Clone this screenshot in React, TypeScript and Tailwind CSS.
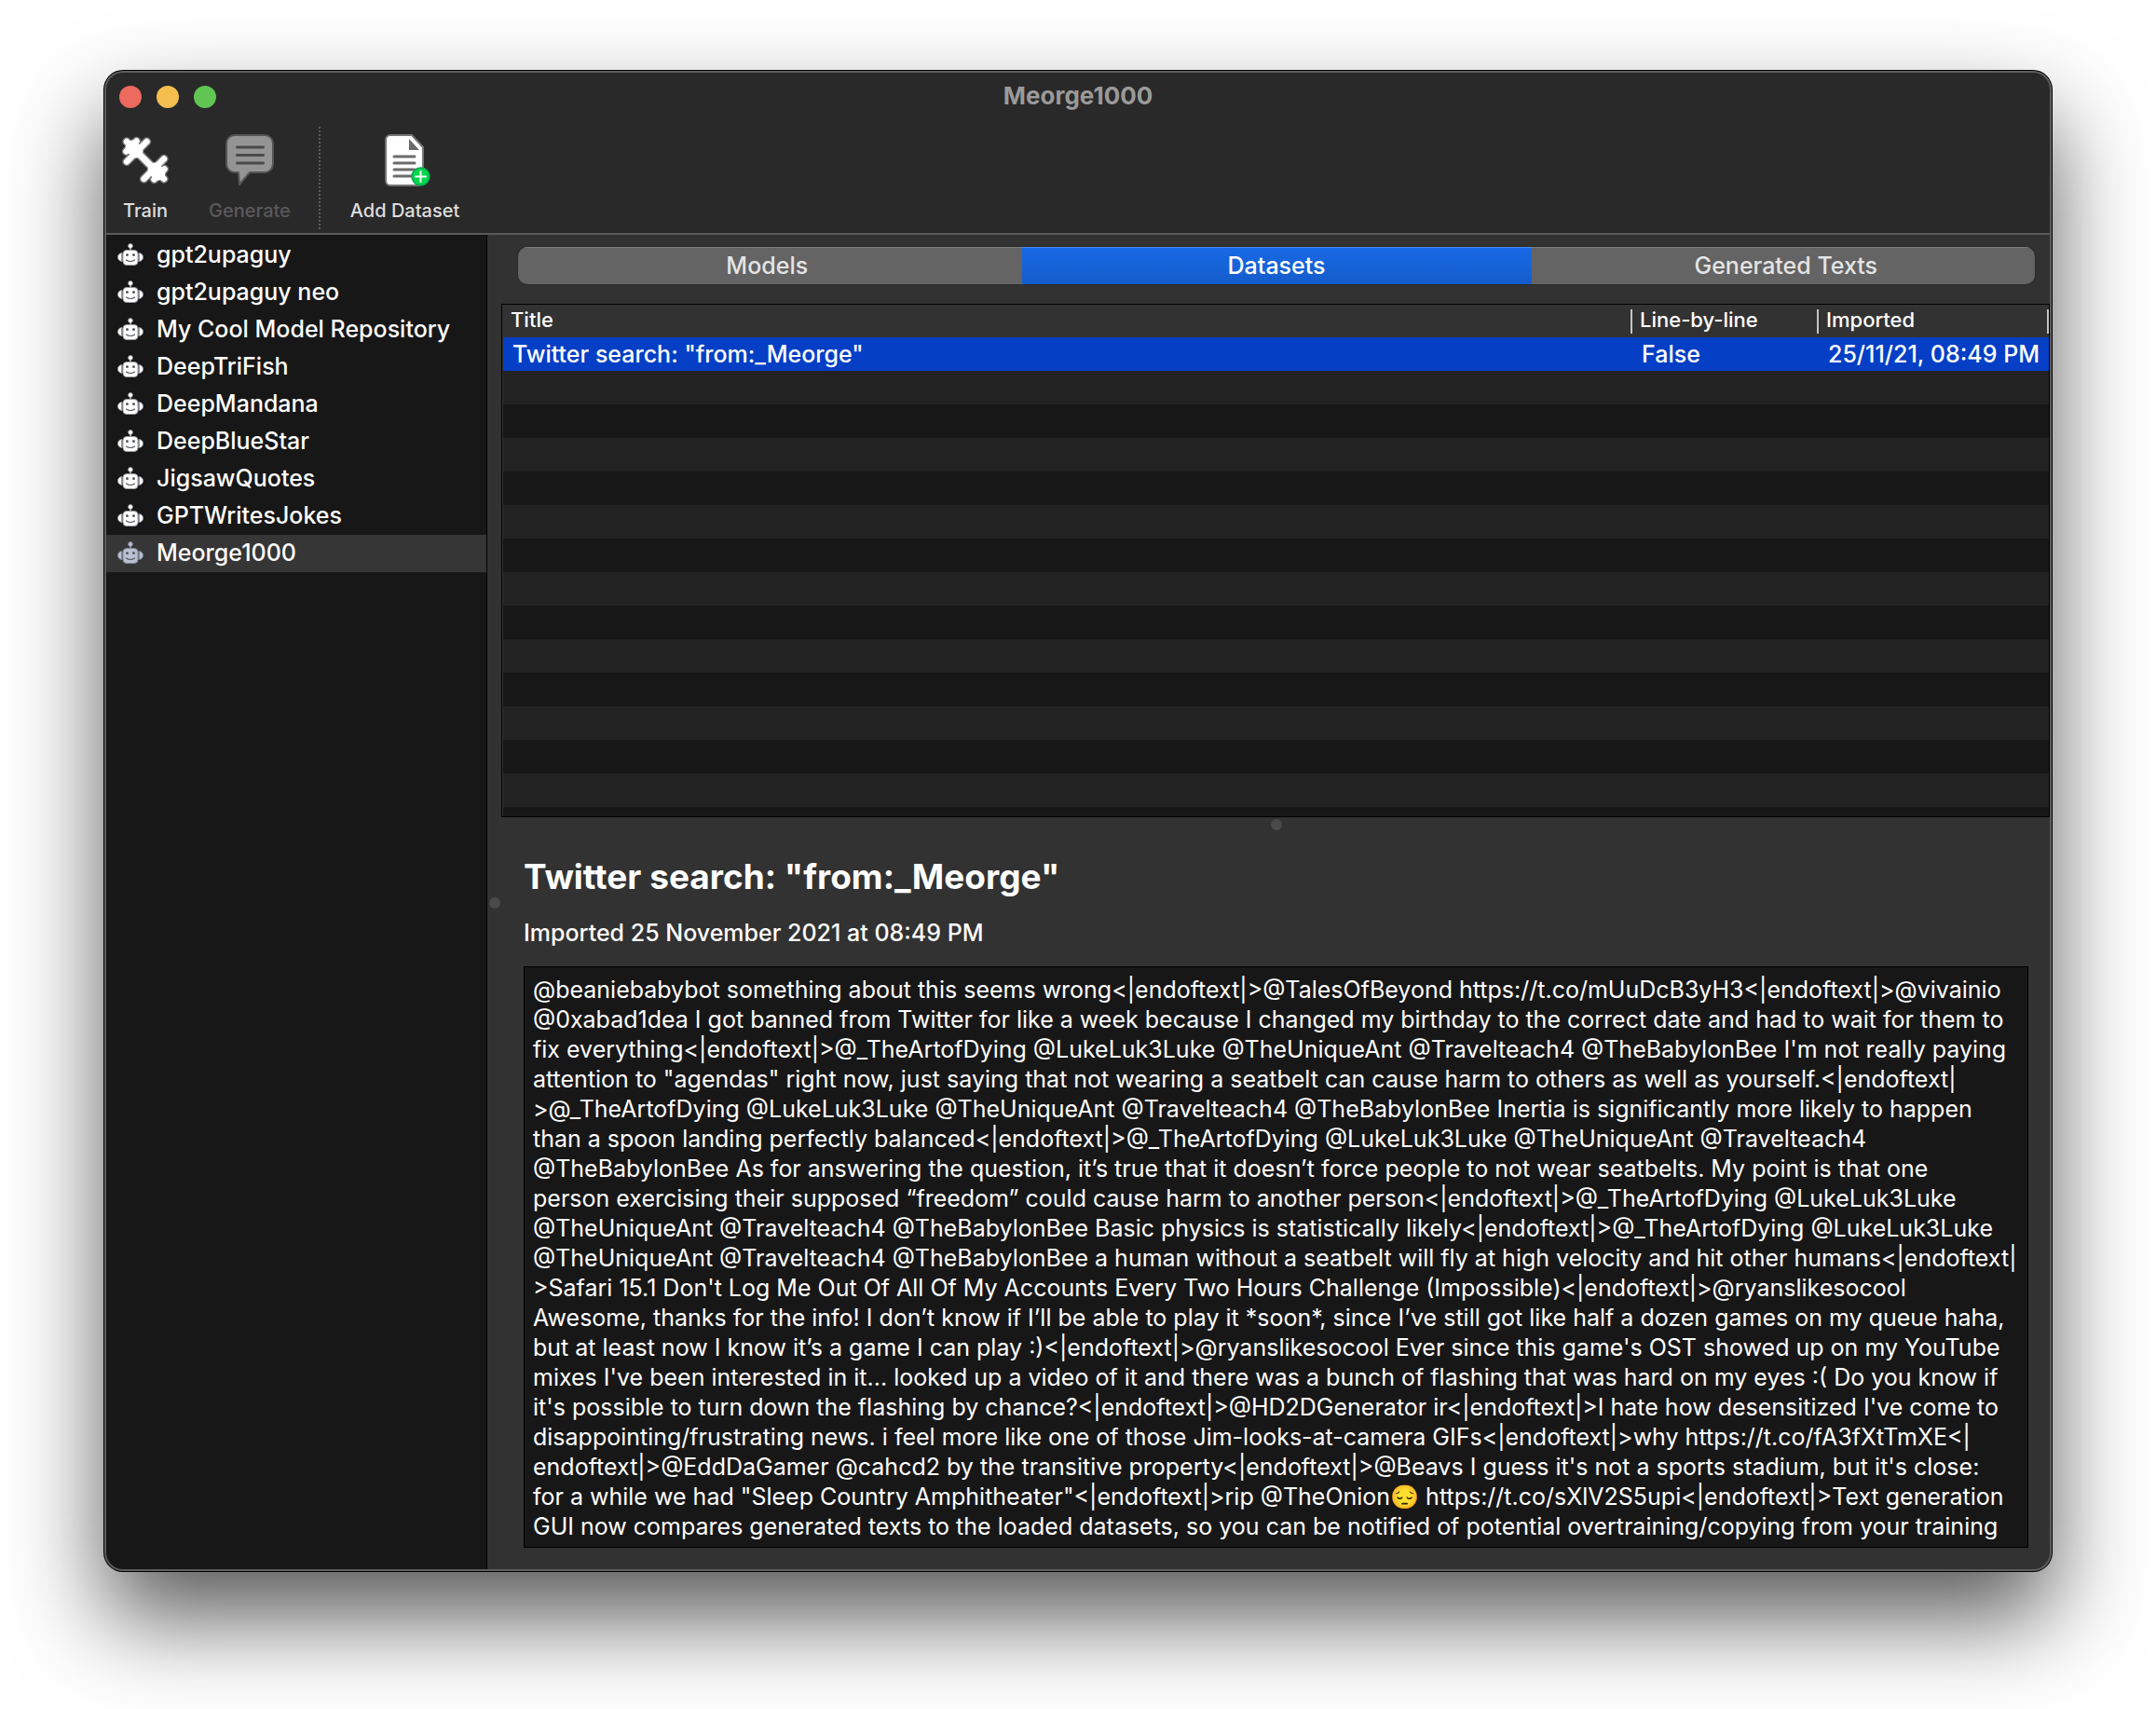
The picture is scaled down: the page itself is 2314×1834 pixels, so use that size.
import type { ReactNode } from "react";

const repositories = [
  "gpt2upaguy",
  "gpt2upaguy neo",
  "My Cool Model Repository",
  "DeepTriFish",
  "DeepMandana",
  "DeepBlueStar",
  "JigsawQuotes",
  "GPTWritesJokes",
  "Meorge1000",
];

const emptyRows = Array.from({ length: 14 }, (_, index) => index);

const datasetText = [
  "@beaniebabybot something about this seems wrong<|endoftext|>@TalesOfBeyond https://t.co/mUuDcB3yH3<|endoftext|>@vivainio",
  "@0xabad1dea I got banned from Twitter for like a week because I changed my birthday to the correct date and had to wait for them to",
  "fix everything<|endoftext|>@_TheArtofDying @LukeLuk3Luke @TheUniqueAnt @Travelteach4 @TheBabylonBee I'm not really paying",
  "attention to \"agendas\" right now, just saying that not wearing a seatbelt can cause harm to others as well as yourself.<|endoftext|",
  ">@_TheArtofDying @LukeLuk3Luke @TheUniqueAnt @Travelteach4 @TheBabylonBee Inertia is significantly more likely to happen",
  "than a spoon landing perfectly balanced<|endoftext|>@_TheArtofDying @LukeLuk3Luke @TheUniqueAnt @Travelteach4",
  "@TheBabylonBee As for answering the question, it’s true that it doesn’t force people to not wear seatbelts. My point is that one",
  "person exercising their supposed “freedom” could cause harm to another person<|endoftext|>@_TheArtofDying @LukeLuk3Luke",
  "@TheUniqueAnt @Travelteach4 @TheBabylonBee Basic physics is statistically likely<|endoftext|>@_TheArtofDying @LukeLuk3Luke",
  "@TheUniqueAnt @Travelteach4 @TheBabylonBee a human without a seatbelt will fly at high velocity and hit other humans<|endoftext|",
  ">Safari 15.1 Don't Log Me Out Of All Of My Accounts Every Two Hours Challenge (Impossible)<|endoftext|>@ryanslikesocool",
  "Awesome, thanks for the info! I don’t know if I’ll be able to play it *soon*, since I’ve still got like half a dozen games on my queue haha,",
  "but at least now I know it’s a game I can play :)<|endoftext|>@ryanslikesocool Ever since this game's OST showed up on my YouTube",
  "mixes I've been interested in it... looked up a video of it and there was a bunch of flashing that was hard on my eyes :( Do you know if",
  "it's possible to turn down the flashing by chance?<|endoftext|>@HD2DGenerator ir<|endoftext|>I hate how desensitized I've come to",
  "disappointing/frustrating news. i feel more like one of those Jim-looks-at-camera GIFs<|endoftext|>why https://t.co/fA3fXtTmXE<|",
  "endoftext|>@EddDaGamer @cahcd2 by the transitive property<|endoftext|>@Beavs I guess it's not a sports stadium, but it's close:",
  "for a while we had \"Sleep Country Amphitheater\"<|endoftext|>rip @TheOnion😔 https://t.co/sXlV2S5upi<|endoftext|>Text generation",
  "GUI now compares generated texts to the loaded datasets, so you can be notified of potential overtraining/copying from your training",
  "data",
].join("\n");

function RobotIcon({ selected = false }: { selected?: boolean }) {
  const face = selected ? "#b9c0d2" : "#ffffff";
  const edge = selected ? "#7e8593" : "#9a9a9a";
  return (
    <svg width="28" height="26" viewBox="0 0 28 26" aria-hidden="true">
      <path d="M14 4v4" stroke={edge} strokeWidth="2" />
      <circle cx="14" cy="3" r="2.4" fill={face} stroke={edge} strokeWidth="0.8" />
      <path d="M4.500 10.500v9C2 19 0.500 17.500 0.500 15s1.500-4 4-4.500z" fill={face} stroke={edge} strokeWidth="0.8" />
      <path d="M23.500 10.500v9c2.500-.5 4-2 4-4.500s-1.500-4-4-4.500z" fill={face} stroke={edge} strokeWidth="0.8" />
      <path d="M5 10.500v9M23 10.500v9" stroke={edge} strokeWidth="1.500" />
      <rect x="6" y="7.500" width="16" height="16" rx="4" fill={face} stroke={edge} strokeWidth="1" />
      <circle cx="10.500" cy="12.500" r="1.500" fill="#555b66" />
      <circle cx="17.500" cy="12.500" r="1.500" fill="#555b66" />
      <path d="M9.500 18c2.500 2 6.500 2 9 0" fill="none" stroke="#555b66" strokeWidth="1.200" strokeLinecap="round" />
    </svg>
  );
}

function DumbbellIcon() {
  const bars =
    "M27.500 6L6 27.500M16.500 5.500L5.500 16.500M6 6L12 12M24.500 46L46 24.500M35.500 46.500L46.500 35.500M46 46L40 40";
  return (
    <svg width="52" height="52" viewBox="0 0 52 52" fill="none" strokeLinecap="round" aria-hidden="true">
      <path d={bars} stroke="#757575" strokeWidth="9.500" />
      <path d="M14 14L38 38" stroke="#757575" strokeWidth="10" />
      <path d={bars} stroke="#ffffff" strokeWidth="6.500" />
      <path d="M14 14L38 38" stroke="#ffffff" strokeWidth="7" />
      <path d="M12 12L16 16M40 40L36 36" stroke="#ffffff" strokeWidth="15" />
    </svg>
  );
}

function SpeechIcon() {
  return (
    <svg width="52" height="56" viewBox="0 0 52 56" aria-hidden="true">
      <path d="M10 1h32a9 9 0 0 1 9 9v22a9 9 0 0 1-9 9H26L15 54l-1-13h-4a9 9 0 0 1-9-9V10a9 9 0 0 1 9-9z" fill="#949494" stroke="#555555" strokeWidth="2" strokeLinejoin="round" />
      <path d="M12.500 14h28M12.500 22.500h28M12.500 31h28" stroke="#4a4a4a" strokeWidth="3" strokeLinecap="round" />
    </svg>
  );
}

function AddDocumentIcon() {
  return (
    <svg width="58" height="56" viewBox="-7 0 58 56" aria-hidden="true">
      <path d="M6 1h23l12 13v36a5 5 0 0 1-5 5H6a5 5 0 0 1-5-5V6a5 5 0 0 1 5-5z" fill="#ffffff" stroke="#757575" strokeWidth="2" strokeLinejoin="round" />
      <path d="M26 5v12h11z" fill="#6b6b6b" />
      <path d="M10 24h22M10 31h22M10 38h22M10 45h20" stroke="#6b6b6b" strokeWidth="3" strokeLinecap="round" />
      <circle cx="38.500" cy="45.500" r="9.500" fill="#00d64a" stroke="#0aa653" strokeWidth="1.500" />
      <path d="M38.500 40v11M33 45.500h11" stroke="#ffffff" strokeWidth="2" strokeLinecap="round" />
    </svg>
  );
}

function ToolButton({ label, icon, disabled }: { label: string; icon: ReactNode; disabled?: boolean }) {
  return (
    <button
      type="button"
      disabled={disabled}
      className="flex flex-col items-center justify-between text-[20px] leading-6 font-medium text-[#dedede] disabled:text-[#5a5a5a]"
    >
      <span className="flex h-14 items-center">{icon}</span>
      <span className="whitespace-nowrap">{label}</span>
    </button>
  );
}

export default function App() {
  return (
    <div className="flex h-screen bg-white px-28 pt-[76px] pb-[148px] font-['Inter','Noto_Sans',sans-serif] font-medium">
      <div className="relative flex min-w-0 flex-1 flex-col overflow-hidden rounded-[20px] bg-[#292929] shadow-[0_0_0_1px_#000,0_50px_100px_rgba(0,0,0,0.65)]">
        <header className="flex flex-col border-b-2 border-[#5a5a5a]">
          <div className="grid h-14 grid-cols-3 items-center px-4">
            <div className="flex gap-4">
              <button type="button" aria-label="Close" className="size-6 rounded-full bg-[#ec6a5e]" />
              <button type="button" aria-label="Minimize" className="size-6 rounded-full bg-[#f4bf4f]" />
              <button type="button" aria-label="Zoom" className="size-6 rounded-full bg-[#61c554]" />
            </div>
            <h1 className="pb-1 text-center text-[26px] font-bold text-[#9a9a9a]">Meorge1000</h1>
          </div>
          <div className="flex h-[118px] pt-3 pb-3 pl-[18px]">
            <ToolButton label="Train" icon={<DumbbellIcon />} />
            <div className="w-[42px]" />
            <ToolButton label="Generate" icon={<SpeechIcon />} disabled />
            <div className="mr-8 -mt-2 -mb-2 ml-[30px] border-l-2 border-dotted border-[#5a5a5a]" />
            <ToolButton label="Add Dataset" icon={<AddDocumentIcon />} />
          </div>
        </header>

        <div className="flex min-h-0 flex-1">
          <nav aria-label="Repositories" className="w-[411px] shrink-0 border-r border-black bg-[#171717] pt-0.5">
            {repositories.map((name) => {
              const selected = name === "Meorge1000";
              return (
                <button
                  key={name}
                  type="button"
                  aria-current={selected ? "true" : undefined}
                  className="flex h-10 w-full items-center gap-3.5 pl-3.5 text-left text-[25px] whitespace-nowrap text-white aria-[current=true]:bg-[#363636]"
                >
                  <RobotIcon selected={selected} />
                  <span>{name}</span>
                </button>
              );
            })}
          </nav>

          <div className="flex w-[15px] shrink-0 items-center justify-center bg-[#323232]">
            <span className="size-3 rounded-full bg-[#4a4a4a]" />
          </div>

          <main className="flex min-w-0 flex-1 flex-col bg-[#323232]">
            <div role="tablist" className="mx-[18px] mt-[13px] flex h-10 shrink-0 overflow-hidden rounded-[10px] bg-[#646464] text-[25px] text-[#e4e4e4] shadow-[0_0_0_1px_#2a2a2a]">
              <button type="button" role="tab" aria-selected="false" className="flex-1 border-t border-[#7c7c7c] pr-1.5">Models</button>
              <button type="button" role="tab" aria-selected="true" className="w-[547px] border-t border-[#4a8cf0] bg-linear-to-b from-[#1869e6] to-[#145ccb] text-white">Datasets</button>
              <button type="button" role="tab" aria-selected="false" className="flex-1 border-t border-[#7c7c7c] pl-1.5">Generated Texts</button>
            </div>

            <div className="mt-[21px] mr-0.5 h-[551px] shrink-0 overflow-hidden border border-black pl-px">
              <table className="w-full table-fixed border-collapse text-left whitespace-nowrap text-white">
                <colgroup>
                  <col />
                  <col className="w-[200px]" />
                  <col className="w-[249px]" />
                </colgroup>
                <thead>
                  <tr className="h-[35px] text-[22px] leading-[22px]">
                    <th className="p-0 font-medium"><div className="pb-1 pl-2">Title</div></th>
                    <th className="p-0 font-medium"><div className="border-l-2 border-[#c4c4c4] pb-1 pl-2">Line-by-line</div></th>
                    <th className="p-0 font-medium"><div className="border-x-2 border-[#c4c4c4] pb-1 pl-2">Imported</div></th>
                  </tr>
                </thead>
                <tbody>
                  <tr className="h-9 bg-[#053fc5] text-[25px] leading-8">
                    <td className="p-0 pl-2.5">Twitter search: "from:_Meorge"</td>
                    <td className="p-0 pl-3">False</td>
                    <td className="p-0 pl-3">25/11/21, 08:49 PM</td>
                  </tr>
                  {emptyRows.map((row) => (
                    <tr key={row} className="h-9 odd:bg-[#171717] even:bg-[#222222]">
                      <td colSpan={3} className="p-0" />
                    </tr>
                  ))}
                </tbody>
              </table>
            </div>

            <div className="flex h-4 shrink-0 items-center justify-center">
              <span className="size-3 rounded-full bg-[#4a4a4a]" />
            </div>

            <section className="flex min-h-0 flex-1 flex-col pr-[25px] pb-[25px] pl-6 text-white">
              <h2 className="mt-6 text-[37px] leading-12 font-bold">Twitter search: "from:_Meorge"</h2>
              <p className="mt-5 text-[25px] leading-8">Imported 25 November 2021 at 08:49 PM</p>
              <textarea
                readOnly
                aria-label="Dataset contents"
                wrap="off"
                value={datasetText}
                className="mt-5 min-h-0 flex-1 resize-none overflow-hidden border border-black bg-[#171717] px-[9px] py-2 text-[25px] leading-8 font-normal text-white outline-none"
              />
            </section>
          </main>
        </div>
        <div className="pointer-events-none absolute inset-0 rounded-[20px] border-2 border-[#5e5e5e]" />
      </div>
    </div>
  );
}
